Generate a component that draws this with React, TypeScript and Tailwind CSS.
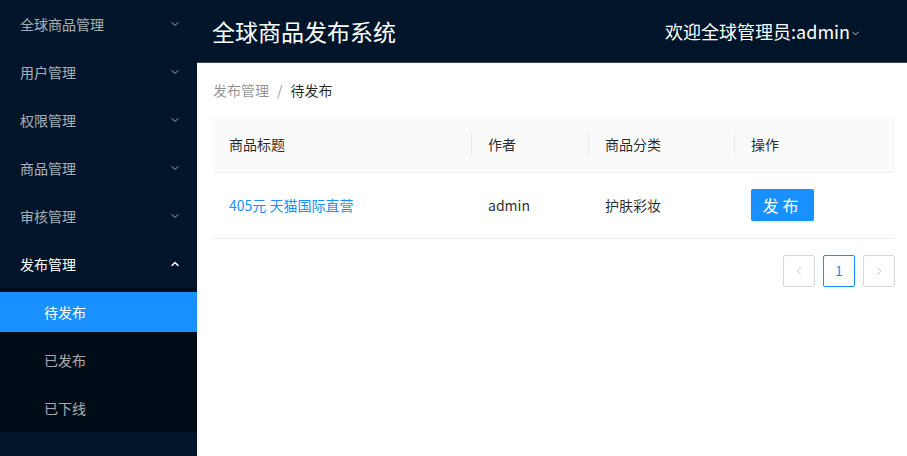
import { ChevronDown, ChevronUp, ChevronLeft, ChevronRight } from "lucide-react";

const font = { fontFamily: '"Noto Sans CJK SC", "Noto Sans", sans-serif' };

const menus = ["全球商品管理", "用户管理", "权限管理", "商品管理", "审核管理"];
const subs = ["待发布", "已发布", "已下线"];

export default function App() {
  return (
    <div className="flex h-[456px] w-[907px] overflow-hidden bg-white" style={font}>
      <aside className="flex w-[197px] shrink-0 flex-col bg-[#001529] text-[14px]">
        {menus.map((m) => (
          <div key={m} className="my-1 flex h-10 shrink-0 items-center justify-between pl-5 pr-4 text-white/65">
            <span>{m}</span>
            <ChevronDown size={12} strokeWidth={2} />
          </div>
        ))}
        <div className="my-1 flex h-10 shrink-0 items-center justify-between pl-5 pr-4 text-white">
          <span>发布管理</span>
          <ChevronUp size={12} strokeWidth={3} />
        </div>
        <div className="flex flex-col bg-[#000c17]">
          {subs.map((s, i) => (
            <div
              key={s}
              className={
                i === 0
                  ? "my-1 flex h-10 items-center bg-[#1890ff] pl-11 text-white"
                  : "my-1 flex h-10 items-center pl-11 text-white/65"
              }
            >
              {s}
            </div>
          ))}
        </div>
      </aside>
      <div className="flex flex-1 flex-col">
        <header className="flex h-[63px] shrink-0 items-center justify-between border-b border-[#3a4a5c] bg-[#001529] pl-[15px] pr-[46px] text-white">
          <h1 className="text-[23px]">全球商品发布系统</h1>
          <div className="flex items-center text-[18px]">
            欢迎全球管理员:admin
            <ChevronDown size={11} strokeWidth={2} className="mt-1 text-white/80" />
          </div>
        </header>
        <main className="pl-4 pr-3 pt-[17px] text-[14px]">
          <div className="flex items-center gap-2 text-black/45">
            <span>发布管理</span>
            <span>/</span>
            <span className="text-black/85">待发布</span>
          </div>
          <table className="mt-[16px] w-full border-collapse text-black/85">
            <thead>
              <tr className="h-[55px] border-b border-[#f0f0f0] bg-[#fafafa] text-left">
                <th className="relative w-[259px] pl-4 font-normal">
                  商品标题
                  <span className="absolute right-0 top-1/2 h-[22px] w-px -translate-y-1/2 bg-[#ebebeb]" />
                </th>
                <th className="relative w-[117px] pl-4 font-normal">
                  作者
                  <span className="absolute right-0 top-1/2 h-[22px] w-px -translate-y-1/2 bg-[#ebebeb]" />
                </th>
                <th className="relative w-[146px] pl-4 font-normal">
                  商品分类
                  <span className="absolute right-0 top-1/2 h-[22px] w-px -translate-y-1/2 bg-[#ebebeb]" />
                </th>
                <th className="pl-4 font-normal">操作</th>
              </tr>
            </thead>
            <tbody>
              <tr className="h-[66px] border-b border-[#f0f0f0]">
                <td className="pl-4 text-[#1890ff]">405元 天猫国际直营</td>
                <td className="pl-4">admin</td>
                <td className="pl-4">护肤彩妆</td>
                <td className="pl-4">
                  <button className="h-8 w-[63px] rounded-[2px] bg-[#1890ff] text-[16px] tracking-[4px] text-white shadow-sm">
                    发布
                  </button>
                </td>
              </tr>
            </tbody>
          </table>
          <div className="mt-4 flex justify-end gap-2">
            <div className="flex h-8 w-8 items-center justify-center rounded-[2px] border border-[#d9d9d9] text-black/25">
              <ChevronLeft size={14} strokeWidth={1.5} />
            </div>
            <div className="flex h-8 w-8 items-center justify-center rounded-[2px] border border-[#1890ff] text-[#1890ff]">
              1
            </div>
            <div className="flex h-8 w-8 items-center justify-center rounded-[2px] border border-[#d9d9d9] text-black/25">
              <ChevronRight size={14} strokeWidth={1.5} />
            </div>
          </div>
        </main>
      </div>
    </div>
  );
}
